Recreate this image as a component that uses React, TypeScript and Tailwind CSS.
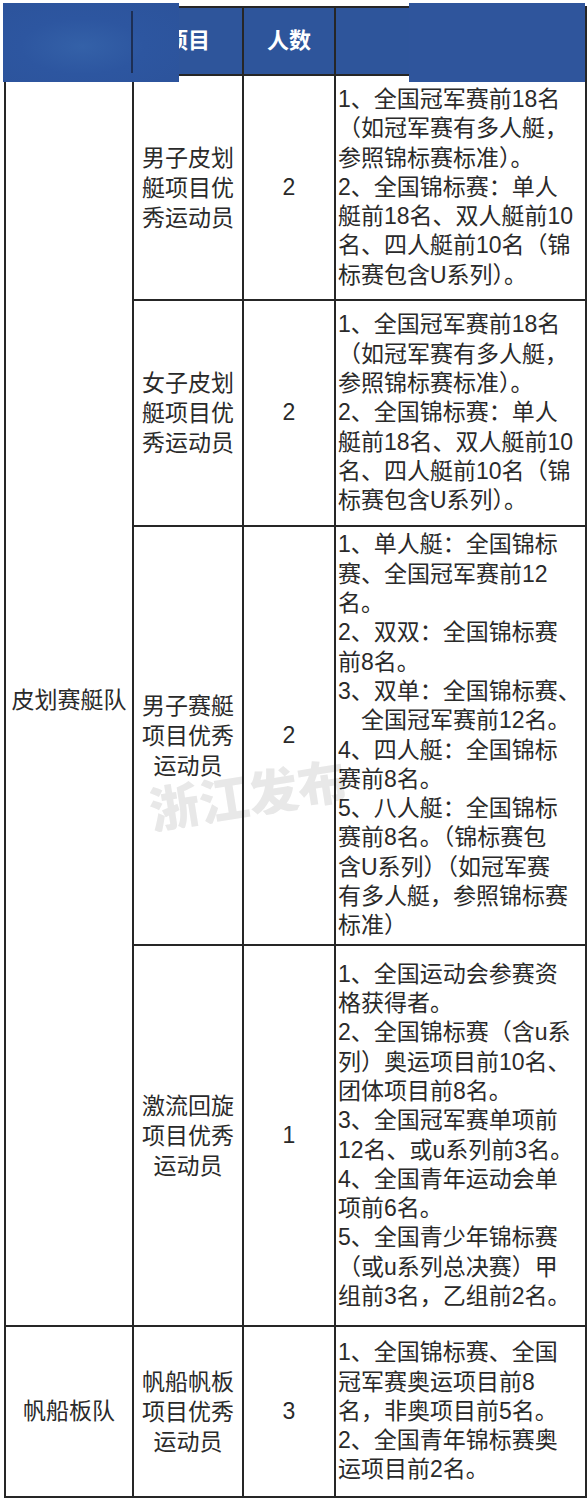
import React from "react";

type Row = {
  team?: { name: string; span: number };
  item: string[];
  count: string;
  req: string[];
  h: string;
};

const rows: Row[] = [
  {
    team: { name: "皮划赛艇队", span: 4 },
    item: ["男子皮划", "艇项目优", "秀运动员"],
    count: "2",
    h: "h-[225px]",
    req: [
      "1、全国冠军赛前18名",
      "（如冠军赛有多人艇，",
      "参照锦标赛标准）。",
      "2、全国锦标赛：单人",
      "艇前18名、双人艇前10",
      "名、四人艇前10名（锦",
      "标赛包含U系列）。",
    ],
  },
  {
    item: ["女子皮划", "艇项目优", "秀运动员"],
    count: "2",
    h: "h-[226px]",
    req: [
      "1、全国冠军赛前18名",
      "（如冠军赛有多人艇，",
      "参照锦标赛标准）。",
      "2、全国锦标赛：单人",
      "艇前18名、双人艇前10",
      "名、四人艇前10名（锦",
      "标赛包含U系列）。",
    ],
  },
  {
    item: ["男子赛艇", "项目优秀", "运动员"],
    count: "2",
    h: "h-[419px]",
    req: [
      "1、单人艇：全国锦标",
      "赛、全国冠军赛前12",
      "名。",
      "2、双双：全国锦标赛",
      "前8名。",
      "3、双单：全国锦标赛、",
      "　全国冠军赛前12名。",
      "4、四人艇：全国锦标",
      "赛前8名。",
      "5、八人艇：全国锦标",
      "赛前8名。（锦标赛包",
      "含U系列）（如冠军赛",
      "有多人艇，参照锦标赛",
      "标准）",
    ],
  },
  {
    item: ["激流回旋", "项目优秀", "运动员"],
    count: "1",
    h: "h-[381px]",
    req: [
      "1、全国运动会参赛资",
      "格获得者。",
      "2、全国锦标赛（含u系",
      "列）奥运项目前10名、",
      "团体项目前8名。",
      "3、全国冠军赛单项前",
      "12名、或u系列前3名。",
      "4、全国青年运动会单",
      "项前6名。",
      "5、全国青少年锦标赛",
      "（或u系列总决赛）甲",
      "组前3名，乙组前2名。",
    ],
  },
  {
    team: { name: "帆船板队", span: 1 },
    item: ["帆船帆板", "项目优秀", "运动员"],
    count: "3",
    h: "h-[171px]",
    req: [
      "1、全国锦标赛、全国",
      "冠军赛奥运项目前8",
      "名，非奥项目前5名。",
      "2、全国青年锦标赛奥",
      "运项目前2名。",
    ],
  },
];

const cell = "border-2 border-[#262626] align-middle";

export default function App() {
  return (
    <div className="relative h-[1506px] w-[588px] overflow-hidden bg-white pl-[4px] pt-[6px] font-['Liberation_Sans','Noto_Sans_CJK_SC',sans-serif] text-[23px] leading-[29.3px] text-[#2a2a2a]">
      {/* faint watermark behind the table */}
      <div className="absolute left-[148px] top-[768px] w-[196px] -rotate-[9deg] overflow-hidden whitespace-nowrap font-['Noto_Sans_CJK_SC',sans-serif] text-[50px] font-black leading-none text-[#e8e8e8]">
        浙江发布
      </div>

      <table className="relative w-[581px] table-fixed border-collapse">
        <colgroup>
          <col className="w-[128px]" />
          <col className="w-[110px]" />
          <col className="w-[92px]" />
          <col className="w-[251px]" />
        </colgroup>
        <thead>
          <tr className="h-[68px] bg-[#2e559b] text-[22px] font-bold text-white">
            <th className={cell}></th>
            <th className={cell}>项目</th>
            <th className={cell}>人数</th>
            <th className={cell}></th>
          </tr>
        </thead>
        <tbody>
          {rows.map((r, i) => (
            <tr key={i} className={r.h}>
              {r.team ? (
                <td rowSpan={r.team.span} className={`${cell} text-center`}>
                  {r.team.name}
                </td>
              ) : null}
              <td className={`${cell} text-center`}>
                {r.item.map((t) => (
                  <div key={t} className="whitespace-nowrap leading-[30px]">
                    {t}
                  </div>
                ))}
              </td>
              <td className={`${cell} text-center`}>{r.count}</td>
              <td className={`${cell} pl-[2px]`}>
                {r.req.map((t, j) => (
                  <div key={j} className="whitespace-nowrap">
                    {t}
                  </div>
                ))}
              </td>
            </tr>
          ))}
        </tbody>
      </table>

      {/* blurred cover boxes over the header */}
      <div className="absolute left-[3px] top-[3px] h-[79px] w-[176px] bg-[radial-gradient(ellipse_at_45%_55%,#3461a8_0%,#2d56a0_45%,#2c539b_100%)]">
        <div className="absolute left-[128px] top-[8px] h-[62px] w-[2px] bg-[#1d2f55]" />
      </div>
      <div className="absolute left-[409px] top-[3px] h-[79px] w-[176px] bg-[#2f559c]" />
    </div>
  );
}
